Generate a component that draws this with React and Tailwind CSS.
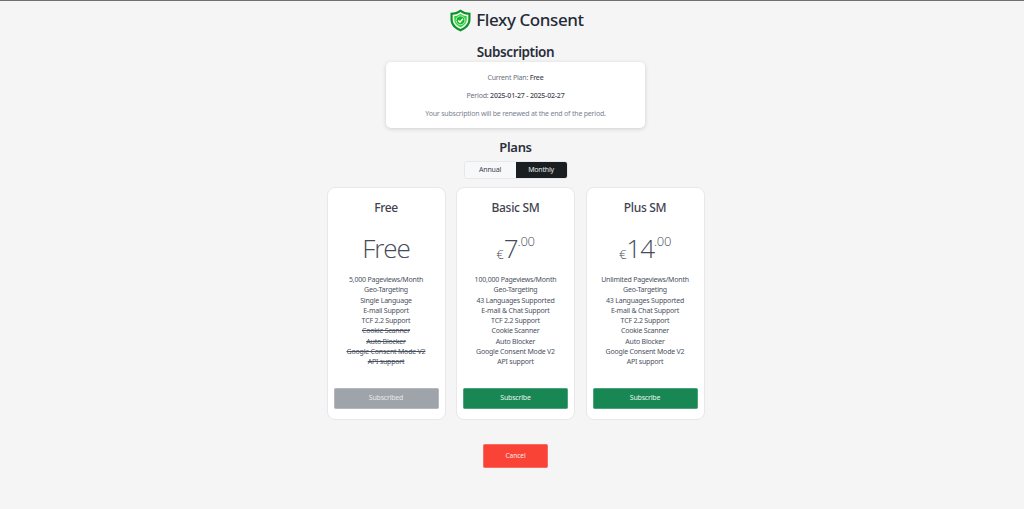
const font = { fontFamily: '"Noto Sans", "Open Sans", sans-serif' };
const light = { fontFamily: '"Open Sans", "Noto Sans", sans-serif' };

function Shield() {
  return (
    <svg width="21" height="23" viewBox="0 0 22 24" className="shrink-0">
      <path d="M11 0.5 C13.5 2.5 17.5 4 21.5 4 V11 C21.5 17 16.5 21.5 11 23.5 C5.5 21.5 0.5 17 0.5 11 V4 C4.5 4 8.5 2.5 11 0.5 Z" fill="#0f8f2c" />
      <path d="M11 3 C13 4.5 16 5.8 19.2 6 V11 C19.2 15.8 15.2 19.2 11 21 C6.8 19.2 2.8 15.8 2.8 11 V6 C6 5.8 9 4.5 11 3 Z" fill="#e9fbe9" />
      <path d="M11 4.8 C13 6.2 15.2 7.2 17.5 7.4 V11 C17.5 14.8 14.3 17.6 11 19 C7.7 17.6 4.5 14.8 4.5 11 V7.4 C6.8 7.2 9 6.2 11 4.8 Z" fill="#2fd13f" />
      <circle cx="11" cy="11.8" r="4.6" fill="#17b52f" stroke="#dff8df" strokeWidth="0.8" />
      <path d="M8.6 11.9 L10.4 13.7 L13.6 10.1" fill="none" stroke="#fff" strokeWidth="1.5" />
    </svg>
  );
}

const plans = [
  {
    name: "Free",
    features: [
      ["5,000 Pageviews/Month"], ["Geo-Targeting"], ["Single Language"], ["E-mail Support"], ["TCF 2.2 Support"],
      ["Cookie Scanner", true], ["Auto Blocker", true], ["Google Consent Mode V2", true], ["API support", true],
    ],
    button: "Subscribed",
    disabled: true,
  },
  {
    name: "Basic SM",
    price: "7",
    features: [
      ["100,000 Pageviews/Month"], ["Geo-Targeting"], ["43 Languages Supported"], ["E-mail & Chat Support"], ["TCF 2.2 Support"],
      ["Cookie Scanner"], ["Auto Blocker"], ["Google Consent Mode V2"], ["API support"],
    ],
    button: "Subscribe",
  },
  {
    name: "Plus SM",
    price: "14",
    features: [
      ["Unlimited Pageviews/Month"], ["Geo-Targeting"], ["43 Languages Supported"], ["E-mail & Chat Support"], ["TCF 2.2 Support"],
      ["Cookie Scanner"], ["Auto Blocker"], ["Google Consent Mode V2"], ["API support"],
    ],
    button: "Subscribe",
  },
];

function PlanCard({ plan }) {
  return (
    <div className="w-[119px] h-[233px] bg-white rounded-[8px] border border-[#e8e8ea] flex flex-col items-center px-[6px] pb-[10px]">
      <div className="mt-[12px] h-[16px] leading-[16px] text-[12px] tracking-[-0.3px] font-medium text-[#3f4350]">{plan.name}</div>
      <div style={light} className="mt-[14px] h-[36px] flex items-center justify-center text-[#454b58] font-light">
        {plan.price ? (
          <div className="flex items-start">
            <span className="text-[13px] mt-[13px] leading-[16px]">€</span>
            <span className="text-[26px] leading-[30px] tracking-[-1px]">{plan.price}</span>
            <span className="text-[13px] leading-[16px] tracking-[-0.3px]">.00</span>
          </div>
        ) : (
          <span className="text-[26px] leading-none tracking-[-1px]">Free</span>
        )}
      </div>
      <div className="mt-[9px] flex flex-col items-center">
        {plan.features.map(([text, struck]) => (
          <div key={text} className={`text-[7px] tracking-[-0.2px] leading-[10.3px] text-[#4b5160] whitespace-nowrap ${struck ? "line-through" : ""}`}>
            {text}
          </div>
        ))}
      </div>
      <button
        className={`mt-auto w-full h-[21px] rounded-[1.5px] text-[7px] tracking-[-0.2px] text-center border ${
          plan.disabled ? "bg-[#9fa3aa] border-[#b4b8bd] text-[#e8e9eb]" : "bg-[#198754] border-[#4aa47a] text-[#e8f3ee]"
        }`}
      >
        {plan.button}
      </button>
    </div>
  );
}

export default function App() {
  return (
    <div style={font} className="min-h-[509px] bg-[#f5f5f5] border-t border-[#6f6f6f] pl-[7px] flex flex-col items-center">
      <div className="mt-[7px] ml-[3px] h-[24px] flex items-center gap-[5px]">
        <Shield />
        <span className="text-[17px] leading-[24px] tracking-[-0.4px] font-medium text-[#252b37]">Flexy Consent</span>
      </div>
      <h2 className="mt-[10px] h-[20px] leading-[20px] text-[13.5px] tracking-[-0.4px] font-semibold text-[#2a2f3a]">Subscription</h2>
      <div className="w-[259px] h-[66px] bg-white rounded-[5px] shadow-[0_1px_4px_rgba(0,0,0,0.16)] flex flex-col items-center justify-between pt-[10px] pb-[9px] text-[7px] tracking-[-0.2px] leading-[11px] text-[#6b7280]">
        <div>Current Plan: <span className="font-medium text-[#3f4350]">Free</span></div>
        <div>Period: <span className="font-medium text-[#3f4350]">2025-01-27 - 2025-02-27</span></div>
        <div className="text-[#7a8290]">Your subscription will be renewed at the end of the period.</div>
      </div>
      <h2 className="mt-[9px] h-[20px] leading-[20px] text-[13px] tracking-[-0.3px] font-semibold text-[#2a2f3a]">Plans</h2>
      <div className="mt-[4px] flex w-[104px] h-[18px] rounded-[3px] border border-[#e6e8ec] overflow-hidden text-[7px] tracking-[-0.2px]">
        <div className="flex-1 bg-[#f7f8fa] text-[#3f4350] flex items-center justify-center">Annual</div>
        <div className="flex-1 bg-[#1a1e21] text-[#e6e8ea] flex items-center justify-center">Monthly</div>
      </div>
      <div className="mt-[8px] flex gap-[10.5px]">
        {plans.map((p) => (
          <PlanCard key={p.name} plan={p} />
        ))}
      </div>
      <button className="mt-[24px] w-[65px] h-[24px] bg-[#f94337] border border-[#fb6b62] rounded-[1.5px] text-[6.5px] text-[#ffe9e7]">
        Cancel
      </button>
    </div>
  );
}
